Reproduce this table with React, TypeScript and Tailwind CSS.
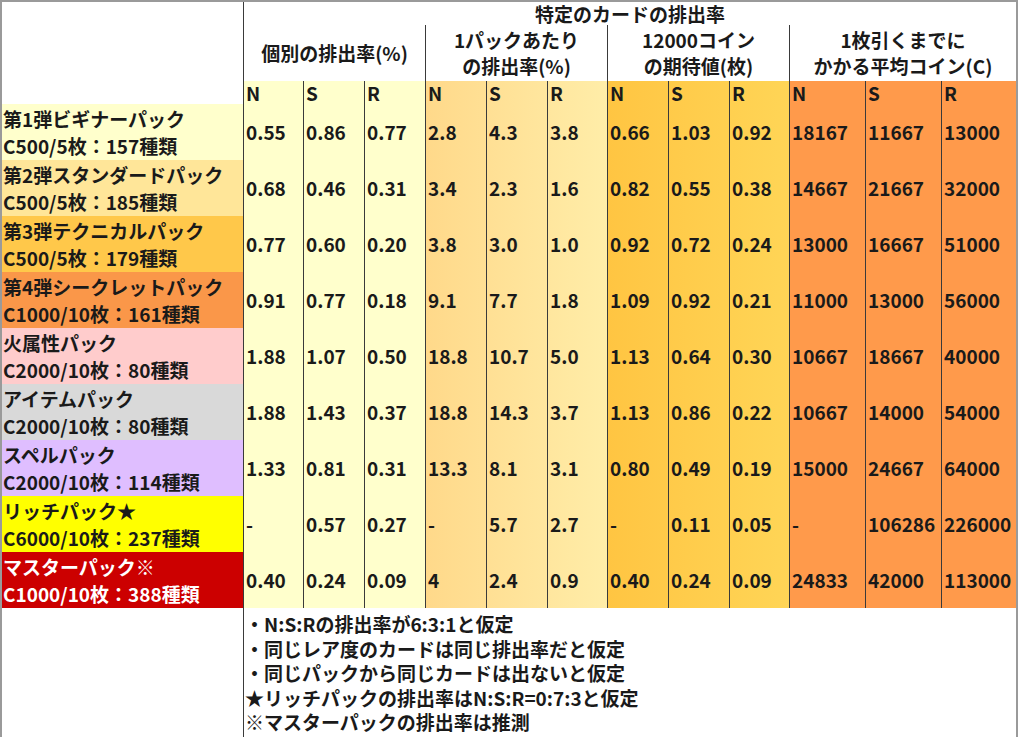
import React from "react";

type Row = { name: string; sub: string; bg: string; text: string; vals: string[] };

const rows: Row[] = [
  { name: "第1弾ビギナーパック", sub: "C500/5枚：157種類", bg: "bg-[#FFFFCC]", text: "text-[#1a1a1a]", vals: ["0.55", "0.86", "0.77", "2.8", "4.3", "3.8", "0.66", "1.03", "0.92", "18167", "11667", "13000"] },
  { name: "第2弾スタンダードパック", sub: "C500/5枚：185種類", bg: "bg-[#FFE699]", text: "text-[#1a1a1a]", vals: ["0.68", "0.46", "0.31", "3.4", "2.3", "1.6", "0.82", "0.55", "0.38", "14667", "21667", "32000"] },
  { name: "第3弾テクニカルパック", sub: "C500/5枚：179種類", bg: "bg-[#FFC84A]", text: "text-[#1a1a1a]", vals: ["0.77", "0.60", "0.20", "3.8", "3.0", "1.0", "0.92", "0.72", "0.24", "13000", "16667", "51000"] },
  { name: "第4弾シークレットパック", sub: "C1000/10枚：161種類", bg: "bg-[#FA9749]", text: "text-[#1a1a1a]", vals: ["0.91", "0.77", "0.18", "9.1", "7.7", "1.8", "1.09", "0.92", "0.21", "11000", "13000", "56000"] },
  { name: "火属性パック", sub: "C2000/10枚：80種類", bg: "bg-[#FFCCCC]", text: "text-[#1a1a1a]", vals: ["1.88", "1.07", "0.50", "18.8", "10.7", "5.0", "1.13", "0.64", "0.30", "10667", "18667", "40000"] },
  { name: "アイテムパック", sub: "C2000/10枚：80種類", bg: "bg-[#D9D9D9]", text: "text-[#1a1a1a]", vals: ["1.88", "1.43", "0.37", "18.8", "14.3", "3.7", "1.13", "0.86", "0.22", "10667", "14000", "54000"] },
  { name: "スペルパック", sub: "C2000/10枚：114種類", bg: "bg-[#DFBEFF]", text: "text-[#1a1a1a]", vals: ["1.33", "0.81", "0.31", "13.3", "8.1", "3.1", "0.80", "0.49", "0.19", "15000", "24667", "64000"] },
  { name: "リッチパック★", sub: "C6000/10枚：237種類", bg: "bg-[#FFFF00]", text: "text-[#1a1a1a]", vals: ["-", "0.57", "0.27", "-", "5.7", "2.7", "-", "0.11", "0.05", "-", "106286", "226000"] },
  { name: "マスターパック※", sub: "C1000/10枚：388種類", bg: "bg-[#CC0000]", text: "text-white", vals: ["0.40", "0.24", "0.09", "4", "2.4", "0.9", "0.40", "0.24", "0.09", "24833", "42000", "113000"] },
];

type Group = {
  title: string[];
  outer: string;
  body: string;
  widths: string[];
  offset: number;
};

const groups: Group[] = [
  { title: ["個別の排出率(%)"], outer: "w-[181px]", body: "bg-[#FFFFCC]", widths: ["w-[59px]", "w-[61px]", "w-[61px]"], offset: 0 },
  { title: ["1パックあたり", "の排出率(%)"], outer: "w-[182px] border-l border-[#3a3a3a]", body: "bg-gradient-to-r from-[#FFD98A] to-[#FFEDA8]", widths: ["w-[60px]", "w-[61px]", "w-[60px]"], offset: 3 },
  { title: ["12000コイン", "の期待値(枚)"], outer: "w-[182px] border-l border-[#3a3a3a]", body: "bg-gradient-to-r from-[#FFC542] to-[#FFD556]", widths: ["w-[60px]", "w-[61px]", "w-[60px]"], offset: 6 },
  { title: ["1枚引くまでに", "かかる平均コイン(C)"], outer: "w-[227px] border-l border-[#3a3a3a]", body: "bg-[#FF9A4B]", widths: ["w-[75px]", "w-[76px]", "w-[75px]"], offset: 9 },
];

const letters = ["N", "S", "R"];

export default function App() {
  return (
    <div
      className="w-[1024px] h-[742px] bg-white text-[19px] font-bold text-[#1a1a1a]"
      style={{ fontFamily: '"Noto Sans CJK JP", "Noto Sans", sans-serif' }}
    >
      <div className="w-[1018px] h-[737px] flex flex-col border-t-2 border-x-2 border-[#9a9a9a]">
        <div className="flex">
          {/* label column */}
          <div className="w-[242px] border-r border-[#3a3a3a] flex flex-col">
            <div className="h-[102px] bg-white" />
            {rows.map((r) => (
              <div key={r.name} className={`h-[56px] ${r.bg} ${r.text} flex flex-col justify-center pl-[1px] leading-[27px] whitespace-nowrap`}>
                <div>{r.name}</div>
                <div>{r.sub}</div>
              </div>
            ))}
          </div>
          {/* right part */}
          <div className="flex flex-col">
            <div className="h-[23px] flex items-center justify-center leading-[23px] whitespace-nowrap">特定のカードの排出率</div>
            <div className="flex">
              {groups.map((g) => (
                <div key={g.title[0]} className={`${g.outer} flex flex-col`}>
                  <div className="h-[56px] bg-white flex flex-col items-center justify-center leading-[26px] whitespace-nowrap">
                    {g.title.map((t) => (
                      <div key={t}>{t}</div>
                    ))}
                  </div>
                  <div className={`flex ${g.body}`}>
                    {g.widths.map((w, ci) => (
                      <div key={ci} className={`${w} flex flex-col ${ci > 0 ? "border-l border-[#3a3a3a]" : ""}`}>
                        <div className="h-[23px] flex items-center pl-[2px] leading-[23px]">{letters[ci]}</div>
                        {rows.map((r) => (
                          <div key={r.name} className="h-[56px] flex items-center pl-[2px] whitespace-nowrap">
                            {r.vals[g.offset + ci]}
                          </div>
                        ))}
                      </div>
                    ))}
                  </div>
                </div>
              ))}
            </div>
          </div>
        </div>
        {/* notes */}
        <div className="flex flex-1">
          <div className="w-[242px] border-r border-[#3a3a3a]" />
          <div className="flex-1 pt-[4px] pl-[1px] leading-[24.5px] whitespace-nowrap">
            <div>・N:S:Rの排出率が6:3:1と仮定</div>
            <div>・同じレア度のカードは同じ排出率だと仮定</div>
            <div>・同じパックから同じカードは出ないと仮定</div>
            <div>★リッチパックの排出率はN:S:R=0:7:3と仮定</div>
            <div>※マスターパックの排出率は推測</div>
          </div>
        </div>
      </div>
    </div>
  );
}
